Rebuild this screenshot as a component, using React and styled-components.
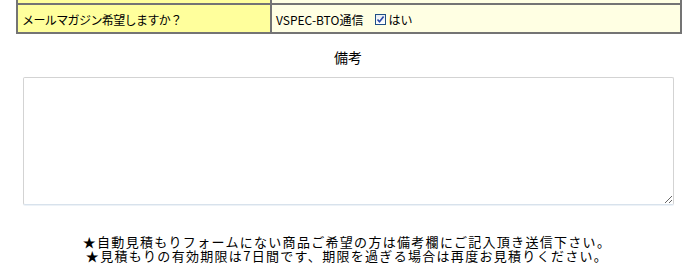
import React from 'react';
import styled, { createGlobalStyle } from 'styled-components';

const GlobalStyle = createGlobalStyle`
  html, body {
    margin: 0;
    padding: 0;
    background: #ffffff;
  }
  body {
    font-family: "Noto Sans CJK JP", "Liberation Sans", sans-serif;
    color: #000000;
  }
`;

const Page = styled.div`
  width: 700px;
  height: 279px;
  overflow: hidden;
  display: flex;
  flex-direction: column;
`;

const FormTable = styled.table`
  width: 666px;
  margin: -2px 0 0 16px;
  border-collapse: collapse;
  font-size: 12px;
`;

const Cell = styled.td`
  border: 2px solid #747474;
  background: ${({ $label }) => ($label ? '#ffff9c' : '#ffffe3')};
  width: ${({ $label }) => ($label ? '248px' : 'auto')};
  height: ${({ $thin }) => ($thin ? '3px' : '25px')};
  padding: ${({ $thin }) => ($thin ? '0' : '2px 0 0 4px')};
  line-height: ${({ $thin }) => ($thin ? '3px' : '14px')};
  font-size: ${({ $thin }) => ($thin ? '0' : '12px')};
  letter-spacing: ${({ $label }) => ($label ? '-0.6px' : '0')};
  white-space: nowrap;
`;

const Answer = styled.div`
  display: flex;
  align-items: center;
`;

const Service = styled.span`
  margin-right: 12px;
`;

const Box = styled.span`
  width: 11px;
  height: 11px;
  box-sizing: border-box;
  border: 1px solid #1f4f85;
  background: linear-gradient(#e8edf3, #ffffff);
  display: inline-flex;
  align-items: center;
  justify-content: center;
  margin-right: 2px;
`;

const Remarks = styled.section`
  display: flex;
  flex-direction: column;
  align-items: center;
  margin-top: 15px;
`;

const RemarksTitle = styled.div`
  font-size: 14px;
  line-height: 16px;
  margin-left: -4px;
  margin-bottom: 12px;
`;

const Memo = styled.textarea`
  width: 651px;
  height: 128px;
  box-sizing: border-box;
  margin: 0 4px 0 0;
  border: 1px solid #d3d3d3;
  border-bottom-color: #d8e2ec;
  border-radius: 2px;
  box-shadow: 0 1px 0 #edf2f7;
  padding: 2px;
  font-family: inherit;
  outline: none;
`;

const Notes = styled.div`
  margin-top: 30px;
  text-align: center;
  font-size: 13px;
  letter-spacing: 1.3px;
  line-height: 14px;
  padding-right: 6px;
`;

const Check = () => (
  <svg width="9" height="9" viewBox="0 0 9 9">
    <path d="M1.5 4.5 L3.5 6.8 L7.6 1.5" fill="none" stroke="#2b49a8" strokeWidth="1.6" />
  </svg>
);

const App = () => {
  return (
    <Page>
      <GlobalStyle />
      <FormTable>
        <tbody>
          <tr>
            <Cell $label $thin />
            <Cell $thin />
          </tr>
          <tr>
            <Cell $label>メールマガジン希望しますか？</Cell>
            <Cell>
              <Answer>
                <Service>VSPEC-BTO通信</Service>
                <Box>
                  <Check />
                </Box>
                はい
              </Answer>
            </Cell>
          </tr>
        </tbody>
      </FormTable>
      <Remarks>
        <RemarksTitle>備考</RemarksTitle>
        <Memo />
      </Remarks>
      <Notes>
        ★自動見積もりフォームにない商品ご希望の方は備考欄にご記入頂き送信下さい。
        <br />
        ★見積もりの有効期限は7日間です、期限を過ぎる場合は再度お見積りください。
      </Notes>
    </Page>
  );
};

export default App;
